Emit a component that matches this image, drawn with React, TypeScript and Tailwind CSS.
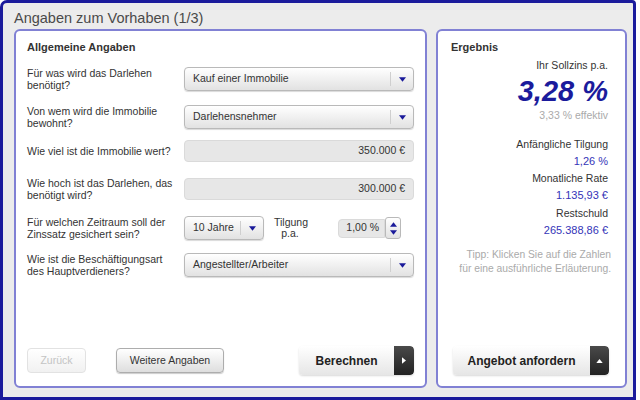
import React from 'react'

const font = { fontFamily: '"Liberation Sans", Arial, sans-serif' }

function Arrow({ dir, className }: { dir: 'down' | 'up' | 'right'; className?: string }) {
  const pts = dir === 'down' ? '0,0 8,0 4,5' : dir === 'up' ? '0,5 8,5 4,0' : '0,0 5,4 0,8'
  const vb = dir === 'right' ? '0 0 5 8' : '0 0 8 5'
  return (
    <svg viewBox={vb} className={className}>
      <polygon points={pts} fill="currentColor" />
    </svg>
  )
}

function Select({ value, className = '' }: { value: string; className?: string }) {
  return (
    <div className={`flex items-center h-[24px] rounded-[4px] border border-[#b9b9b9] bg-gradient-to-b from-white to-[#e2e2e2] shadow-[0_1px_1px_rgba(0,0,0,0.15)] ${className}`}>
      <span className="flex-1 pl-[8px] text-[10.5px] text-[#333]">{value}</span>
      <span className="h-[14px] w-px bg-[#cfcfcf]" />
      <span className="w-[22px] flex justify-center">
        <Arrow dir="down" className="w-[7px] h-[5px] text-[#1a1a9a]" />
      </span>
    </div>
  )
}

function Field({ value }: { value: string }) {
  return (
    <div className="h-[22px] flex items-center justify-end pr-[8px] rounded-[4px] border border-[#dadada] bg-[#e7e7e7] text-[10.5px] text-[#333]">
      {value}
    </div>
  )
}

function Row({ label, children, className = '' }: { label: React.ReactNode; children: React.ReactNode; className?: string }) {
  return (
    <div className={`flex items-center ${className}`}>
      <div className="w-[157px] text-[10.5px] leading-[12px] text-[#333]">{label}</div>
      <div className="flex-1">{children}</div>
    </div>
  )
}

export default function App() {
  return (
    <div className="w-[640px] h-[400px] bg-white" style={font}>
      <div className="w-[636px] h-[400px] border-[3px] border-[#1b1b9c] rounded-tl-[7px] rounded-tr-[4px] bg-[#ececec] flex flex-col pl-[11px] pr-[6px] pb-[9px]">
        <div className="h-[26px] flex items-center pt-[5px] text-[14.5px] text-[#4a4a4a]">Angaben zum Vorhaben (1/3)</div>
        <div className="flex-1 flex gap-[9px]">
          {/* left panel */}
          <div className="w-[413px] border-2 border-[#8181d4] rounded-[6px] bg-white flex flex-col px-[11px] pt-[10px] pb-[11px]">
            <div className="text-[11px] font-bold text-[#333] leading-[12px]">Allgemeine Angaben</div>
            <Row className="mt-[14px]" label={<>Für was wird das Darlehen<br />benötigt?</>}>
              <Select value="Kauf einer Immobilie" />
            </Row>
            <Row className="mt-[14px]" label={<>Von wem wird die Immobilie<br />bewohnt?</>}>
              <Select value="Darlehensnehmer" />
            </Row>
            <Row className="mt-[11px]" label="Wie viel ist die Immobilie wert?">
              <Field value="350.000 €" />
            </Row>
            <Row className="mt-[15px]" label={<>Wie hoch ist das Darlehen, das<br />benötigt wird?</>}>
              <Field value="300.000 €" />
            </Row>
            <Row className="mt-[15px]" label={<>Für welchen Zeitraum soll der<br />Zinssatz gesichert sein?</>}>
              <div className="flex items-center">
                <Select value="10 Jahre" className="w-[80px]" />
                <div className="ml-[10px] w-[32px] text-center text-[10.5px] leading-[11px] text-[#333]">Tilgung<br />p.a.</div>
                <div className="ml-[32px] w-[47px] h-[19px] flex items-center justify-end pr-[5px] rounded-l-[4px] border border-[#dadada] bg-[#e7e7e7] text-[10.5px] text-[#333]">1,00 %</div>
                <div className="w-[16px] h-[22px] flex flex-col items-center justify-center gap-[3px] rounded-[3px] border border-[#b9b9b9] bg-gradient-to-b from-white to-[#e2e2e2]">
                  <Arrow dir="up" className="w-[7px] h-[5px] text-[#1a1a9a]" />
                  <Arrow dir="down" className="w-[7px] h-[5px] text-[#1a1a9a]" />
                </div>
              </div>
            </Row>
            <Row className="mt-[13px]" label={<>Wie ist die Beschäftigungsart<br />des Hauptverdieners?</>}>
              <Select value="Angestellter/Arbeiter" />
            </Row>
            <div className="mt-auto flex items-center">
              <button className="w-[59px] h-[25px] rounded-[4px] border border-[#e2e2e2] bg-gradient-to-b from-white to-[#f1f1f1] text-[10.5px] text-[#c4c4c4]">Zurück</button>
              <button className="ml-[30px] w-[108px] h-[25px] rounded-[4px] border border-[#adadad] bg-gradient-to-b from-white to-[#dedede] shadow-[0_1px_1px_rgba(0,0,0,0.2)] text-[10.5px] text-[#333]">Weitere Angaben</button>
              <button className="ml-auto w-[115px] h-[29px] flex rounded-[4px] overflow-hidden bg-gradient-to-b from-white to-[#e6e6e6] shadow-[0_1px_2px_rgba(0,0,0,0.15)]">
                <span className="flex-1 h-full flex items-center justify-center text-[12px] font-bold text-[#222]">Berechnen</span>
                <span className="w-[20px] h-full flex items-center justify-center bg-gradient-to-b from-[#4a4a4a] to-[#222] rounded-r-[4px]">
                  <Arrow dir="right" className="w-[4px] h-[7px] text-white" />
                </span>
              </button>
            </div>
          </div>
          {/* right panel */}
          <div className="w-[191px] border-2 border-[#8181d4] rounded-[6px] bg-white flex flex-col pl-[13px] pr-[17px] pt-[10px] pb-[11px]">
            <div className="text-[11px] font-bold text-[#333] leading-[12px]">Ergebnis</div>
            <div className="flex flex-col items-end text-right">
              <div className="mt-[6px] text-[10.5px] text-[#333] leading-[12px]">Ihr Sollzins p.a.</div>
              <div className="mt-[3px] text-[29px] leading-[34px] font-bold italic text-[#1b1b9c]">3,28 %</div>
              <div className="mt-[1px] text-[10.5px] text-[#aaa] leading-[12px]">3,33 % effektiv</div>
              <div className="mt-[15px] text-[10.5px] text-[#333] leading-[17px]">Anfängliche Tilgung</div>
              <div className="text-[11px] text-[#3434b8] leading-[17px]">1,26 %</div>
              <div className="text-[10.5px] text-[#333] leading-[17px]">Monatliche Rate</div>
              <div className="text-[11px] text-[#3434b8] leading-[17px]">1.135,93 €</div>
              <div className="text-[10.5px] text-[#333] leading-[18px]">Restschuld</div>
              <div className="text-[11px] text-[#3434b8] leading-[17px]">265.388,86 €</div>
              <div className="mt-[9px] mr-[-3px] text-[10.3px] text-[#aaa] leading-[14px]">Tipp: Klicken Sie auf die Zahlen<br />für eine ausführliche Erläuterung.</div>
            </div>
            <button className="mt-auto w-[156px] h-[29px] ml-[2px] flex rounded-[4px] overflow-hidden bg-gradient-to-b from-white to-[#e6e6e6] shadow-[0_1px_2px_rgba(0,0,0,0.15)]">
              <span className="flex-1 h-full flex items-center justify-center text-[12px] font-bold text-[#222]">Angebot anfordern</span>
              <span className="w-[19px] h-full flex items-center justify-center bg-gradient-to-b from-[#4a4a4a] to-[#222] rounded-r-[4px]">
                <Arrow dir="up" className="w-[7px] h-[4px] text-white" />
              </span>
            </button>
          </div>
        </div>
      </div>
    </div>
  )
}
